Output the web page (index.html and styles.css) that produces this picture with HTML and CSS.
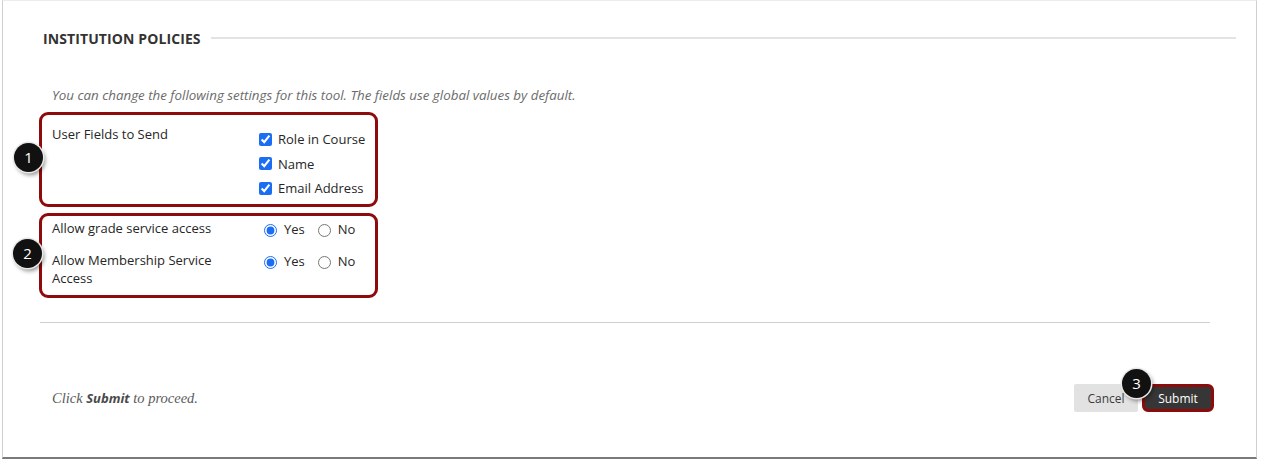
FILE: index.html
```html
<!DOCTYPE html>
<html>
<head>
<meta charset="utf-8">
<link rel="stylesheet" href="styles.css">
</head>
<body>
<div class="frame">
  <div class="section-head">
    <h2 class="section-title">INSTITUTION POLICIES</h2>
    <div class="section-line"></div>
  </div>
  <p class="intro">You can change the following settings for this tool. The fields use global values by default.</p>

  <div class="box box-fields">
    <div class="field-label">User Fields to Send</div>
    <div class="options">
      <label class="opt"><input type="checkbox" checked> Role in Course</label>
      <label class="opt"><input type="checkbox" checked> Name</label>
      <label class="opt"><input type="checkbox" checked> Email Address</label>
    </div>
    <span class="badge badge-1">1</span>
  </div>

  <div class="box box-access">
    <div class="row">
      <div class="row-label">Allow grade service access</div>
      <div class="radios">
        <label class="radio"><input type="radio" name="g" checked> Yes</label>
        <label class="radio"><input type="radio" name="g"> No</label>
      </div>
    </div>
    <div class="row row-2">
      <div class="row-label">Allow Membership Service<br>Access</div>
      <div class="radios">
        <label class="radio"><input type="radio" name="m" checked> Yes</label>
        <label class="radio"><input type="radio" name="m"> No</label>
      </div>
    </div>
    <span class="badge badge-2">2</span>
  </div>

  <div class="divider"></div>

  <div class="footer">
    <p class="proceed">Click <b>Submit</b> to proceed.</p>
    <div class="buttons">
      <button class="btn btn-cancel">Cancel</button>
      <button class="btn btn-submit">Submit</button>
      <span class="badge badge-3">3</span>
    </div>
  </div>
</div>
</body>
</html>
```

FILE: styles.css
```css
html, body {
  margin: 0;
  padding: 0;
  background: #ffffff;
}
body {
  font-family: "Open Sans", "Liberation Sans", sans-serif;
  color: #262626;
}
.frame {
  position: relative;
  box-sizing: border-box;
  margin-left: 2px;
  width: 1255px;
  height: 459px;
  border-top: 1px solid #ececec;
  border-left: 1px solid #cfcfcf;
  border-right: 1px solid #d0d0d0;
  border-bottom: 2px solid #7a7a7a;
  padding: 27px 20px 0 40px;
}
.section-head {
  display: flex;
  align-items: center;
  gap: 10px;
  height: 20px;
}
.section-title {
  margin: 0;
  font-size: 14px;
  font-weight: 700;
  color: #333;
  letter-spacing: 0.1px;
  white-space: nowrap;
}
.section-line {
  flex: 1;
  height: 2px;
  background: #e3e3e3;
}
.intro {
  margin: 38px 0 0 9px;
  font-size: 13.35px;
  line-height: 18px;
  font-style: italic;
  color: #6b6b6b;
}
.box {
  position: relative;
  box-sizing: border-box;
  width: 339px;
  margin-left: -4px;
  border: 3px solid #8e0b0b;
  border-radius: 9px;
  font-size: 13px;
  line-height: 18px;
}
.box-fields {
  margin-top: 8px;
  height: 95px;
  display: flex;
  padding: 10px 0 0 10px;
}
.field-label {
  width: 207px;
}
.options {
  display: flex;
  flex-direction: column;
  margin-top: 2px;
}
.opt {
  display: flex;
  align-items: center;
  height: 24.5px;
  gap: 6px;
}
.opt input {
  margin: 0;
  width: 13px;
  height: 13px;
  accent-color: #1b6ef3;
}
.box-access {
  margin-top: 6px;
  height: 85px;
  padding: 3px 0 0 10px;
}
.row {
  display: flex;
}
.row-2 {
  margin-top: 13px;
}
.row-label {
  width: 212px;
}
.radios {
  display: flex;
  gap: 13px;
  padding-top: 1px;
}
.radio {
  display: flex;
  align-items: center;
  gap: 7px;
  height: 18px;
}
.radio input {
  margin: 2px 0 0 0;
  width: 13px;
  height: 13px;
  accent-color: #1b6ef3;
}
.divider {
  margin-top: 24px;
  width: 1170px;
  margin-left: -3px;
  height: 1px;
  background: #cfcfcf;
}
.footer {
  display: flex;
  justify-content: space-between;
  align-items: center;
  margin-top: 61px;
  width: 1171px;
  padding-left: 9px;
  box-sizing: border-box;
}
.proceed {
  margin: 0;
  font-family: "Liberation Serif", "DejaVu Serif", serif;
  font-style: italic;
  font-size: 14.5px;
  color: #5a5a5a;
}
.proceed b {
  font-family: "Open Sans", "Liberation Sans", sans-serif;
  font-weight: 700;
  font-size: 13px;
  color: #4a4a4a;
}
.buttons {
  position: relative;
  display: flex;
  align-items: center;
  gap: 4px;
}
.btn {
  font-family: "Open Sans", "Liberation Sans", sans-serif;
  font-size: 12px;
  height: 28px;
  border: none;
  cursor: pointer;
}
.btn-cancel {
  width: 64px;
  background: #e2e2e2;
  color: #3a3a3a;
  border-radius: 2px;
}
.btn-submit {
  width: 72px;
  background: #363636;
  color: #ffffff;
  border: 3px solid #8e0b0b;
  border-radius: 6px;
}
.badge {
  position: absolute;
  width: 29px;
  height: 29px;
  border-radius: 50%;
  background: #111;
  color: #fff;
  font-size: 15px;
  line-height: 29px;
  text-align: center;
  box-shadow: 0 0 0 1.5px #e8e8e8, 2px 3px 4px rgba(0, 0, 0, 0.45);
}
.badge-1 {
  left: -28px;
  top: 28px;
}
.badge-2 {
  left: -29px;
  top: 23px;
}
.badge-3 {
  left: 48px;
  top: -15px;
}
```
